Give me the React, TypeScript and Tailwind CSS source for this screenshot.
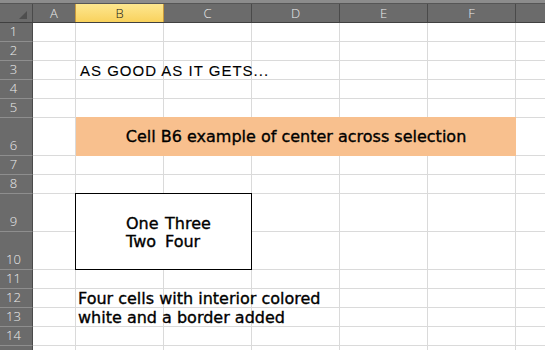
import React from "react";

const rowHeights = [19, 19, 19, 19, 19, 38, 19, 19, 38, 38, 19, 19, 19, 19, 19];
const colLetters = ["C", "D", "E", "F", ""];
const dv = { fontFamily: '"DejaVu Sans", Verdana, sans-serif' };

export default function App() {
  const rowNums = rowHeights.map((_, i) => i + 1);
  return (
    <div className="w-[545px] h-[350px] overflow-hidden bg-white" style={dv}>
      {/* top strip */}
      <div className="h-[3px] bg-[#8c8c8c]" />
      {/* column header */}
      <div
        className="flex h-[20px] bg-[#6b6b6b] border-t border-b border-t-[#565656] border-b-[#404040] text-[13px] font-light text-[#ececec]"
        style={{ fontFamily: '"Open Sans", sans-serif' }}
      >
        <div className="w-[33px] shrink-0 border-r border-[#4a4a4a] flex items-end justify-end pr-[5px] pb-[3px]">
          <svg width="8" height="8" viewBox="0 0 8 8">
            <polygon points="8,0 8,8 0,8" fill="#4e4e4e" />
          </svg>
        </div>
        <div className="w-[42px] shrink-0 flex items-center justify-center pt-[1px]">A</div>
        <div className="w-[89px] shrink-0 border-x border-[#c89a3c] bg-gradient-to-b from-[#fde78f] to-[#f9d25c] text-[#1a1a1a] flex items-center justify-center pt-[1px]">
          B
        </div>
        {colLetters.map((c, i) => (
          <div key={i} className="w-[88px] shrink-0 border-r border-[#4a4a4a] flex items-center justify-center pt-[1px]">
            {c}
          </div>
        ))}
      </div>
      {/* body */}
      <div className="grid grid-cols-[33px_43px_88px_88px_88px_88px_88px_88px] grid-rows-[19px_19px_19px_19px_19px_38px_19px_19px_38px_38px_19px_19px_19px_19px_19px] [-webkit-text-stroke:0.35px_black]">
        {rowNums.map((r) => (
          <React.Fragment key={r}>
            <div
              className="bg-[#6b6b6b] border-r border-b border-r-[#4a4a4a] border-b-[#8e8e8e] text-[#ececec] text-[13px] font-light flex items-end justify-center pr-[5px] leading-none [-webkit-text-stroke:0px]"
              style={{ gridColumn: 1, gridRow: r, fontFamily: '"Open Sans", sans-serif' }}
            >
              <span className="pb-[3px]">{r < 15 ? r : ""}</span>
            </div>
            {[2, 3, 4, 5, 6, 7, 8].map((c) => {
              if (r === 6 && c >= 3 && c <= 7) return null;
              if ((r === 9 || r === 10) && (c === 3 || c === 4)) return null;
              if ((r === 3 || r === 12 || r === 13) && c === 3) return null;
              return <div key={c} className="border-r border-b border-[#dadada]" style={{ gridColumn: c, gridRow: r }} />;
            })}
          </React.Fragment>
        ))}

        {/* row 3 text */}
        <div className="col-start-3 row-start-3 border-r border-b border-[#dadada] relative">
          <span
            className="absolute left-[4px] bottom-[1px] whitespace-nowrap text-[15px] tracking-[1px] text-black leading-none [-webkit-text-stroke:0.1px_black]"
            style={{ fontFamily: '"Liberation Sans", Arial, sans-serif' }}
          >
            AS GOOD AS IT GETS...
          </span>
        </div>

        {/* orange center-across-selection */}
        <div className="col-start-3 col-span-5 row-start-6 -mt-px bg-[#f8c08e] flex items-center justify-center text-[16px] text-black">
          Cell B6 example of center across selection
        </div>

        {/* bordered box */}
        <div className="col-start-3 col-span-2 row-start-9 row-span-2 -mt-px -ml-px border border-black bg-white grid grid-cols-[88px_87px] grid-rows-[38px_37px] text-[16px] text-black leading-none">
          <div className="flex items-end pl-[50px]">One</div>
          <div className="flex items-end pl-[1px]">Three</div>
          <div className="flex items-start pl-[50px] pt-[2px]">Two</div>
          <div className="flex items-start pl-[1px] pt-[2px]">Four</div>
        </div>

        {/* rows 12 / 13 */}
        <div className="col-start-3 row-start-12 border-r border-b border-[#dadada] relative">
          <span className="absolute left-[2px] bottom-0 whitespace-nowrap text-[16px] text-black leading-none">
            Four cells with interior colored
          </span>
        </div>
        <div className="col-start-3 row-start-13 border-r border-b border-[#dadada] relative">
          <span className="absolute left-[2px] bottom-0 whitespace-nowrap text-[16px] text-black leading-none">
            white and a border added
          </span>
        </div>
      </div>
    </div>
  );
}
